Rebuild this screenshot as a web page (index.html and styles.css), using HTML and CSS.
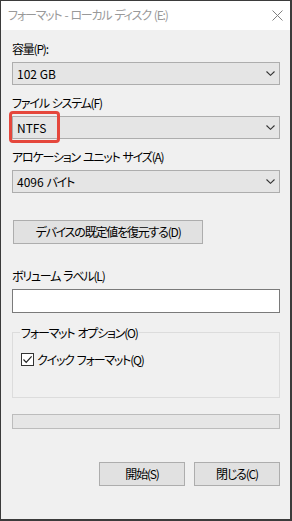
FILE: index.html
```html
<!DOCTYPE html>
<html lang="ja">
<head>
<meta charset="utf-8">
<title>フォーマット</title>
<link rel="stylesheet" href="styles.css">
</head>
<body>
<div class="window">
  <div class="titlebar">
    <span class="title">フォーマット - ローカル ディスク (E:)</span>
    <svg class="close" width="11" height="11" viewBox="0 0 11 11"><path d="M0.5 0.5 L10.5 10.5 M10.5 0.5 L0.5 10.5" stroke="#808080" stroke-width="1" fill="none"/></svg>
  </div>
  <div class="content">
    <div class="field">
      <div class="field-label">容量(P):</div>
      <div class="combo"><span class="latin">102 GB</span><svg class="chev" width="9" height="5" viewBox="0 0 9 5"><path d="M0.5 0.5 L4.5 4.3 L8.5 0.5" stroke="#333" stroke-width="1.1" fill="none"/></svg></div>
    </div>
    <div class="field">
      <div class="field-label">ファイル システム(F)</div>
      <div class="combo highlighted"><span class="latin">NTFS</span><svg class="chev" width="9" height="5" viewBox="0 0 9 5"><path d="M0.5 0.5 L4.5 4.3 L8.5 0.5" stroke="#333" stroke-width="1.1" fill="none"/></svg><div class="mark"></div></div>
    </div>
    <div class="field">
      <div class="field-label">アロケーション ユニット サイズ(A)</div>
      <div class="combo"><span><span class="latin">4096</span> バイト</span><svg class="chev" width="9" height="5" viewBox="0 0 9 5"><path d="M0.5 0.5 L4.5 4.3 L8.5 0.5" stroke="#333" stroke-width="1.1" fill="none"/></svg></div>
    </div>
    <div class="btn restore">デバイスの既定値を復元する(D)</div>
    <div class="field volume">
      <div class="field-label">ボリューム ラベル(L)</div>
      <div class="textbox"></div>
    </div>
    <fieldset class="group">
      <legend>フォーマット オプション(O)</legend>
      <div class="check-row">
        <span class="checkbox"><svg width="11" height="11" viewBox="0 0 11 11"><path d="M1.5 5.5 L4.2 8.3 L9.6 2.4" stroke="#222" stroke-width="1.2" fill="none"/></svg></span>
        <span>クイック フォーマット(Q)</span>
      </div>
    </fieldset>
    <div class="progress"></div>
    <div class="actions">
      <div class="btn action">開始(S)</div>
      <div class="btn action">閉じる(C)</div>
    </div>
  </div>
</div>
</body>
</html>
```

FILE: styles.css
```css
html, body {
  margin: 0;
  padding: 0;
}
body {
  background: #3b3b3b;
  width: 292px;
  height: 521px;
  font-family: "Noto Sans CJK JP", "Noto Sans", sans-serif;
  font-feature-settings: "palt";
  font-size: 12px;
  letter-spacing: -1.2px;
  word-spacing: 1.5px;
  color: #000;
}
.latin {
  letter-spacing: 0;
  word-spacing: 0;
}
.window {
  width: 291px;
  height: 520px;
  box-sizing: border-box;
  border: 1px solid #3b3b3b;
  background: #f0f0f0;
  display: flex;
  flex-direction: column;
}
.titlebar {
  height: 29px;
  background: #fff;
  display: flex;
  align-items: center;
  justify-content: space-between;
  padding: 0 7px 0 7px;
  flex-shrink: 0;
}
.title {
  color: #999;
  font-size: 12px;
  line-height: 16px;
  margin-top: -1px;
}
.close {
  display: block;
  margin-top: -1px;
}
.content {
  padding: 11px 10px 0 11px;
  display: flex;
  flex-direction: column;
}
.field + .field {
  margin-top: 10px;
}
.field-label {
  line-height: 16px;
  height: 16px;
  margin-bottom: 5px;
  white-space: nowrap;
}
.combo {
  position: relative;
  height: 23px;
  box-sizing: border-box;
  border: 1px solid #adadad;
  background: #e5e5e5;
  display: flex;
  align-items: center;
  justify-content: space-between;
  padding: 0 4px 0 4px;
  line-height: 16px;
}
.chev {
  display: block;
}
.mark {
  position: absolute;
  left: -4px;
  top: -6px;
  width: 51px;
  height: 32px;
  box-sizing: border-box;
  border: 3px solid #e5473c;
  border-radius: 4px;
}
.btn {
  box-sizing: border-box;
  height: 24px;
  border: 1px solid #adadad;
  background: #e1e1e1;
  display: flex;
  align-items: center;
  justify-content: center;
  line-height: 16px;
  white-space: nowrap;
}
.restore {
  margin-top: 27px;
  margin-left: 1px;
  width: 190px;
}
.field.volume {
  margin-top: 24px;
}
.textbox {
  height: 24px;
  box-sizing: border-box;
  border: 1px solid #7a7a7a;
  background: #fff;
}
.group {
  margin: 12px 0 0 0;
  padding: 0 7px 31px 7px;
  border: 1px solid #dcdcdc;
  min-inline-size: 0;
}
.group legend {
  padding: 0 1px;
  line-height: 15px;
  height: 15px;
}
.check-row {
  margin-top: 13px;
  margin-left: 1px;
  display: flex;
  align-items: center;
  height: 13px;
  line-height: 16px;
  white-space: nowrap;
}
.checkbox {
  width: 13px;
  height: 13px;
  box-sizing: border-box;
  border: 1px solid #333;
  background: #fff;
  display: flex;
  align-items: center;
  justify-content: center;
  margin-right: 3px;
  flex-shrink: 0;
}
.checkbox svg {
  display: block;
}
.progress {
  margin-top: 16px;
  height: 15px;
  box-sizing: border-box;
  border: 1px solid #bcbcbc;
  background: #e6e6e6;
}
.actions {
  margin-top: 33px;
  display: flex;
  justify-content: flex-end;
  gap: 9px;
}
.action {
  width: 86px;
}
```
